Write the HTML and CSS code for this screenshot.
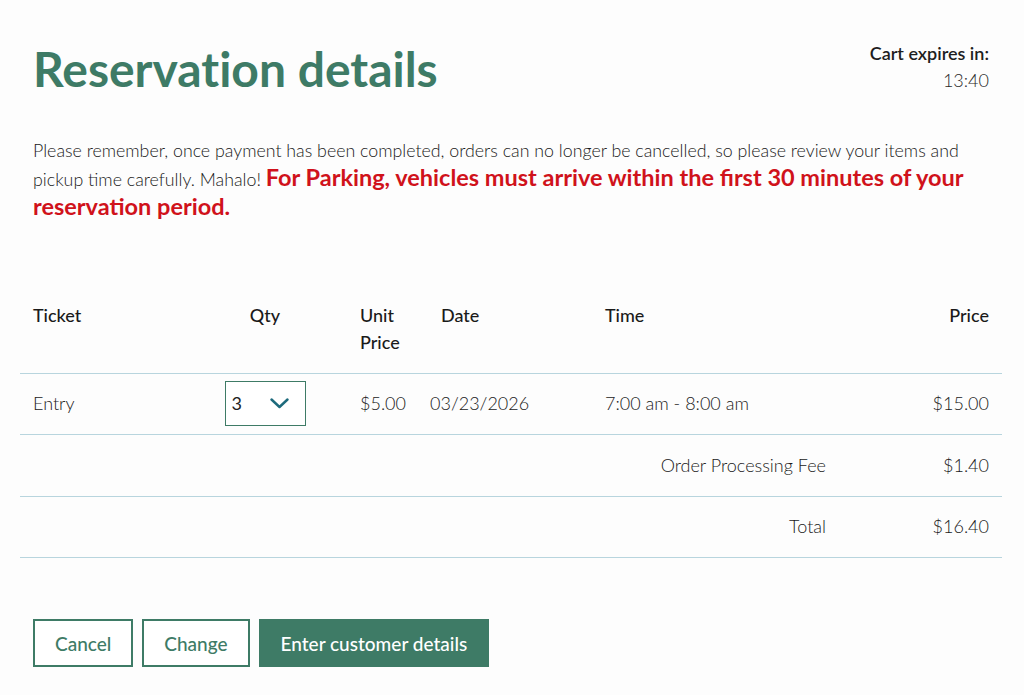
FILE: index.html
```html
<!DOCTYPE html>
<html lang="en">
<head>
<meta charset="utf-8">
<title>Reservation details</title>
<link rel="stylesheet" href="styles.css">
</head>
<body>
<main class="page">
  <header class="top">
    <h1 class="title">Reservation details</h1>
    <div class="cart">
      <div class="cart-label">Cart expires in:</div>
      <div class="cart-time">13:40</div>
    </div>
  </header>
  <p class="notice">Please remember, once payment has been completed, orders can no longer be cancelled, so please review your items and pickup time carefully. Mahalo! <strong class="warn">For Parking, vehicles must arrive within the first 30 minutes of your reservation period.</strong></p>

  <table class="cart-table">
    <colgroup>
      <col class="c-ticket">
      <col class="c-qty">
      <col class="c-unit">
      <col class="c-date">
      <col class="c-time">
      <col class="c-price">
    </colgroup>
    <thead>
      <tr>
        <th>Ticket</th>
        <th class="center">Qty</th>
        <th>Unit Price</th>
        <th>Date</th>
        <th>Time</th>
        <th class="right">Price</th>
      </tr>
    </thead>
    <tbody>
      <tr>
        <td>Entry</td>
        <td class="center">
          <div class="select">
            <span class="select-val">3</span>
            <svg class="chev" width="19" height="11" viewBox="0 0 19 11"><path d="M1.5 1.5 L9.5 9 L17.5 1.5" fill="none" stroke="#1d6a7c" stroke-width="2.4" stroke-linecap="round" stroke-linejoin="round"/></svg>
          </div>
        </td>
        <td>$5.00</td>
        <td class="date-val">03/23/2026</td>
        <td>7:00 am - 8:00 am</td>
        <td class="right">$15.00</td>
      </tr>
      <tr>
        <td colspan="5" class="right">Order Processing Fee</td>
        <td class="right">$1.40</td>
      </tr>
      <tr>
        <td colspan="5" class="right">Total</td>
        <td class="right">$16.40</td>
      </tr>
    </tbody>
  </table>

  <div class="actions">
    <button class="btn btn-outline" type="button">Cancel</button>
    <button class="btn btn-outline" type="button">Change</button>
    <button class="btn btn-fill" type="button">Enter customer details</button>
  </div>
</main>
</body>
</html>
```

FILE: styles.css
```css
* { box-sizing: border-box; }

html, body {
  margin: 0;
  padding: 0;
  background: #fdfdfd;
}

body {
  font-family: Lato, "Open Sans", "Liberation Sans", sans-serif;
  color: #1f1f1f;
}

.page {
  width: 982px;
  margin-left: 20px;
  padding-top: 40px;
}

.top {
  display: flex;
  justify-content: space-between;
  align-items: flex-start;
  padding: 0 13px;
}

.title {
  margin: 0;
  font-size: 48px;
  line-height: 1.2;
  font-weight: 700;
  color: #3e7b66;
  font-variant-ligatures: no-common-ligatures;
}

.cart {
  text-align: right;
  font-size: 18px;
  line-height: 27px;
}

.cart-label {
  font-weight: 600;
  color: #1e1e1e;
}

.cart-time {
  font-weight: 300;
  color: #2a2a2a;
}

.notice {
  margin: 39px 0 0;
  padding: 0 13px;
  font-size: 17.8px;
  line-height: 27px;
  font-weight: 300;
  color: #1a1a1a;
}

.warn {
  font-size: 23.5px;
  font-weight: 700;
  color: #d0121b;
}

.cart-table {
  width: 982px;
  margin-top: 68px;
  border-collapse: collapse;
  table-layout: fixed;
  font-size: 18px;
}

.c-ticket { width: 163px; }
.c-qty { width: 164px; }
.c-unit { width: 81px; }
.c-date { width: 164px; }
.c-time { width: 247px; }
.c-price { width: 163px; }

.cart-table th {
  text-align: left;
  vertical-align: top;
  font-weight: 500;
  color: #1a1a1a;
  line-height: 27px;
  padding: 12px 13px 17px;
}

.cart-table thead tr {
  border-bottom: 1.5px solid #b8d5de;
}

.cart-table td {
  height: 61.5px;
  padding: 0 13px;
  vertical-align: middle;
  font-weight: 300;
  color: #1a1a1a;
  line-height: 27px;
}

.cart-table tbody tr {
  border-bottom: 1.5px solid #b8d5de;
}

.cart-table .center { text-align: center; }
.cart-table .right { text-align: right; }
.cart-table .date-val { padding-left: 2px; }

.select {
  display: inline-flex;
  align-items: center;
  justify-content: space-between;
  width: 81px;
  height: 45px;
  padding: 0 16px 0 6px;
  border: 1px solid #3e7b66;
  background: #fff;
  vertical-align: middle;
}

.select-val {
  font-weight: 400;
  color: #222;
}

.chev { display: block; }

.actions {
  display: flex;
  gap: 9px;
  margin-top: 61px;
  padding-left: 13px;
}

.btn {
  height: 48px;
  font-family: inherit;
  font-size: 19px;
  font-weight: 500;
  border: 2px solid #3e7b66;
  padding: 0 20px;
  cursor: pointer;
}

.btn-outline {
  background: #fff;
  color: #3e7b66;
}

.btn-fill {
  background: #3e7b66;
  color: #fff;
}
```
